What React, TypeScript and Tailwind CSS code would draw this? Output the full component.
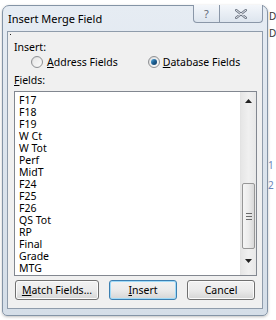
import React from "react";

const font = { fontFamily: '"Segoe UI", "Noto Sans", "Open Sans", sans-serif' };

function Radio({ checked }: { checked?: boolean }) {
  return (
    <span className="relative flex h-[12px] w-[12px] items-center justify-center rounded-full border border-[#8f9194] bg-gradient-to-br from-[#d9d9d9] to-[#fbfbfb]">
      <span className="h-[8px] w-[8px] rounded-full bg-gradient-to-br from-[#e8e8e8] to-[#f8f8f8]" />
      {checked && (
        <span className="absolute h-[6px] w-[6px] rounded-full bg-gradient-to-br from-[#59b3e6] via-[#1d5f92] to-[#0f3c63]" />
      )}
    </span>
  );
}

function Btn({ children, w, def }: { children: React.ReactNode; w: string; def?: boolean }) {
  return (
    <div
      className={`${w} flex h-[20px] items-center justify-center rounded-[3px] border ${
        def ? "border-[#3c7fb1] shadow-[inset_0_0_0_1px_#9fdaf8]" : "border-[#707070] shadow-[inset_0_0_0_1px_#fbfbfb]"
      } bg-gradient-to-b from-[#f2f2f2] via-[#ebebeb] to-[#d6d6d6] text-[10.5px] leading-none text-black`}
    >
      {children}
    </div>
  );
}

const items = ["F17", "F18", "F19", "W Ct", "W Tot", "Perf", "MidT", "F24", "F25", "F26", "QS Tot", "RP", "Final", "Grade", "MTG"];

export default function App() {
  return (
    <div className="relative h-[320px] w-[276px] overflow-hidden bg-white" style={font}>
      <span className="absolute left-[269px] top-[11px] text-[10px] leading-none text-[#333]">D</span>
      <span className="absolute left-[269px] top-[28px] text-[10px] leading-none text-[#333]">D</span>
      <span className="absolute left-[268px] top-[160px] text-[10px] leading-none text-[#6a86b8]">1</span>
      <span className="absolute left-[268px] top-[180px] text-[10px] leading-none text-[#6a86b8]">2</span>
      <div className="pl-[2px] pt-[5px]">
        <div className="flex h-[311px] w-[266px] flex-col rounded-t-[7px] rounded-b-[5px] border border-[#8494a6] bg-gradient-to-b from-[#e6ecf3] via-[#dce4ed] to-[#d5dee8] px-[4px] shadow-[0_1px_3px_rgba(0,0,0,0.25)]">
          <div className="flex h-[25px] items-start justify-between">
            <div className="pl-[1px] pt-[6px] text-[11px] leading-[14px] text-black">Insert Merge Field</div>
            <div className="-mt-px flex h-[18px] rounded-b-[4px] border border-t-0 border-[#8a97a8] bg-gradient-to-b from-[#f4f7fb] to-[#dde5ee]">
              <div className="flex w-[26px] items-center justify-center border-r border-[#8a97a8] text-[11px] leading-none text-[#5f6875]">
                ?
              </div>
              <div className="flex w-[42px] items-center justify-center">
                <svg width="12" height="10" viewBox="0 0 12 10">
                  <path d="M1 1 L11 9 M11 1 L1 9" stroke="#6d7684" strokeWidth="2.4" strokeLinecap="round" />
                  <path d="M1 1 L11 9 M11 1 L1 9" stroke="#f4f6f9" strokeWidth="0.9" strokeLinecap="round" />
                </svg>
              </div>
            </div>
          </div>
          <div className="flex h-[278px] flex-col border border-[#8f9cab] bg-[#f0f0f0]">
            <div className="relative">
              <span className="absolute left-[2px] top-[2px] h-[1px] w-[1px] bg-[#222]" />
            </div>
            <div className="ml-[6px] mt-[9px] text-[10.5px] leading-[13px] text-black">Insert:</div>
            <div className="mt-[1px] flex h-[14px] items-center text-[10.5px] leading-[13px] text-black">
              <div className="ml-[23px] flex items-center gap-[4px]">
                <Radio />
                <span>
                  <span className="underline">A</span>ddress Fields
                </span>
              </div>
              <div className="ml-[30px] flex items-center gap-[3px]">
                <Radio checked />
                <span>
                  <span className="underline">D</span>atabase Fields
                </span>
              </div>
            </div>
            <div className="ml-[6px] mt-[5px] text-[10.5px] leading-[13px] text-black">
              <span className="underline">F</span>ields:
            </div>
            <div className="ml-[6px] mt-[4px] flex h-[185px] w-[243px] border border-[#828790] bg-white">
              <div className="flex-1 pl-[4px] pt-[2px]">
                {items.map((it) => (
                  <div key={it} className="h-[12px] text-[10.5px] leading-[12px] text-black">
                    {it}
                  </div>
                ))}
              </div>
              <div className="flex w-[16px] flex-col items-center border-l border-[#e3e3e3] bg-gradient-to-r from-[#e6e6e6] via-[#f0f0f0] to-[#e8e8e8]">
                <div className="flex h-[17px] w-full items-center justify-center">
                  <svg width="7" height="4" viewBox="0 0 7 4">
                    <path d="M0 4 L3.5 0 L7 4 Z" fill="#222" />
                  </svg>
                </div>
                <div className="mt-[74px] flex h-[66px] w-[13px] flex-col items-center justify-center gap-[2px] rounded-[2px] border border-[#979797] bg-gradient-to-r from-[#f5f5f5] via-[#ececec] to-[#d9d9d9]">
                  <span className="h-px w-[6px] bg-[#6b6b6b]" />
                  <span className="h-px w-[6px] bg-[#6b6b6b]" />
                  <span className="h-px w-[6px] bg-[#6b6b6b]" />
                </div>
                <div className="flex flex-1 items-center justify-center pb-[2px]">
                  <svg width="7" height="4" viewBox="0 0 7 4">
                    <path d="M0 0 L7 0 L3.5 4 Z" fill="#222" />
                  </svg>
                </div>
              </div>
            </div>
            <div className="ml-[7px] mt-[4px] flex gap-[10px]">
              <Btn w="w-[84px]">
                <span>
                  <span className="underline">M</span>atch Fields...
                </span>
              </Btn>
              <Btn w="w-[68px]" def>
                <span>
                  <span className="underline">I</span>nsert
                </span>
              </Btn>
              <Btn w="w-[68px]">Cancel</Btn>
            </div>
          </div>
        </div>
      </div>
    </div>
  );
}
